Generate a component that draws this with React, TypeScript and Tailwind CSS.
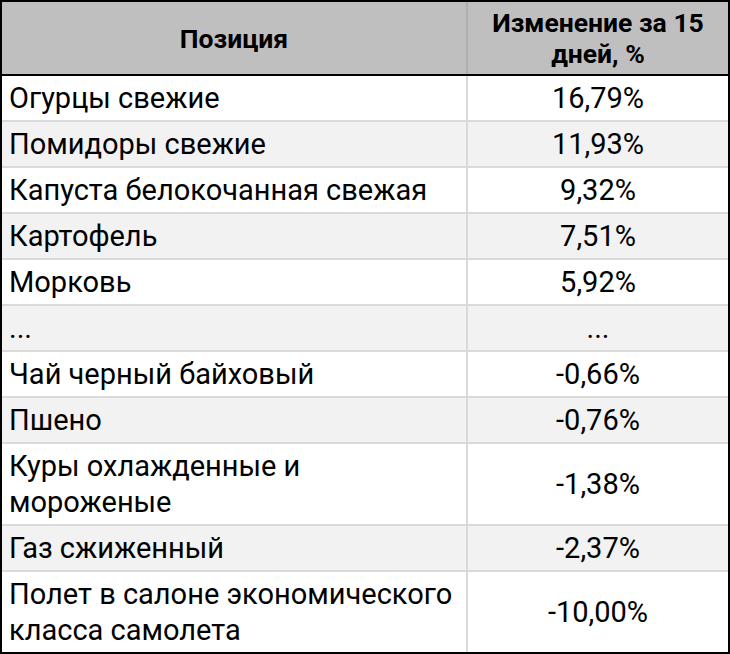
import React from "react";

const rows: { name: string[]; value: string; alt: boolean }[] = [
  { name: ["Огурцы свежие"], value: "16,79%", alt: false },
  { name: ["Помидоры свежие"], value: "11,93%", alt: true },
  { name: ["Капуста белокочанная свежая"], value: "9,32%", alt: false },
  { name: ["Картофель"], value: "7,51%", alt: true },
  { name: ["Морковь"], value: "5,92%", alt: false },
  { name: ["..."], value: "...", alt: true },
  { name: ["Чай черный байховый"], value: "-0,66%", alt: false },
  { name: ["Пшено"], value: "-0,76%", alt: true },
  { name: ["Куры охлажденные и", "мороженые"], value: "-1,38%", alt: false },
  { name: ["Газ сжиженный"], value: "-2,37%", alt: true },
  { name: ["Полет в салоне экономического", "класса самолета"], value: "-10,00%", alt: false },
];

export default function App() {
  return (
    <div
      className="w-[730px] h-[654px] bg-white text-black"
      style={{ fontFamily: "Roboto, 'Liberation Sans', sans-serif" }}
    >
      <div className="w-[730px] border-2 border-black flex flex-col">
        <div className="flex h-[74px] bg-[#bfbfbf] border-b-2 border-black font-bold text-[26.5px] leading-[31px]">
          <div className="w-[466px] border-r-2 border-[#b0b0b0] flex items-center justify-center">
            Позиция
          </div>
          <div className="flex-1 flex flex-col items-center justify-center text-center">
            <span>Изменение за 15</span>
            <span>дней, %</span>
          </div>
        </div>
        {rows.map((r, i) => (
          <div
            key={i}
            className={`flex text-[29px] leading-[36px] ${r.alt ? "bg-[#f2f2f2]" : "bg-white"} ${
              i < rows.length - 1 ? "border-b-2 border-[#dadada]" : ""
            }`}
          >
            <div className="w-[466px] border-r-2 border-[#dadada] pl-[7px] py-[4px] flex flex-col justify-center">
              {r.name.map((n, j) => (
                <span key={j}>{n}</span>
              ))}
            </div>
            <div className="flex-1 flex items-center justify-center py-[4px]">{r.value}</div>
          </div>
        ))}
      </div>
    </div>
  );
}
